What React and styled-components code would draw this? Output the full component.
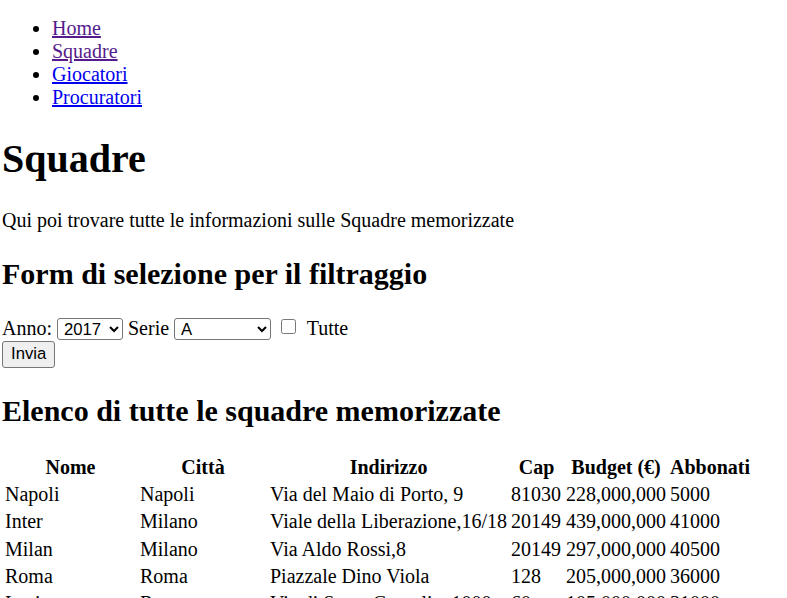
import styled, { createGlobalStyle } from 'styled-components'

const GlobalStyle = createGlobalStyle`
  body {
    margin: 0;
    background: #fff;
    color: #000;
    font-family: 'Liberation Serif', 'Times New Roman', serif;
    font-size: 20px;
  }
`

const Page = styled.div`
  padding: 0 2px;
`

const NavList = styled.ul`
  margin: 17px 0 16px;
  padding-left: 50px;
  list-style: disc;
`

const NavLink = styled.a`
  color: ${(p) => (p.$visited ? '#551a8b' : '#0000ee')};
  text-decoration: underline;
`

const Title = styled.h1`
  font-size: 40px;
  font-weight: bold;
  margin: 26px 0 26.8px;
`

const Intro = styled.p`
  margin: 20px 0;
`

const SectionTitle = styled.h2`
  font-size: 30px;
  font-weight: bold;
  margin: 24.9px 0;
`

const FilterForm = styled.form`
  margin: 0;
  line-height: 25px;
  padding-bottom: 1.5px;
`

const Select = styled.select`
  font-family: 'Liberation Sans', Arial, sans-serif;
  font-size: 16.7px;
  height: 22px;
  width: ${(p) => p.$w}px;
  padding: 0 0 0 2px;
  border: 1px solid #767676;
  border-radius: 3px;
  background: #fff;
  color: #000;
  vertical-align: 0;
`

const Checkbox = styled.input`
  width: 15px;
  height: 15px;
  margin: 0 6px 0 10px;
  vertical-align: 1px;
`

const SubmitButton = styled.button`
  font-family: 'Liberation Sans', Arial, sans-serif;
  font-size: 16.7px;
  height: 27px;
  padding: 0 8px;
  margin: 0;
  border: 1px solid #767676;
  border-radius: 3px;
  background: #efefef;
  color: #000;
  vertical-align: top;
`

const Table = styled.table`
  border-collapse: separate;
  border-spacing: 2px;
  font-size: 20px;
  line-height: 23.25px;
`

const HeadCell = styled.th`
  width: ${(p) => p.$w}px;
  padding: 1.5px 1px 0.5px;
  text-align: center;
  font-weight: bold;
`

const Cell = styled.td`
  padding: 1px;
  white-space: nowrap;
`

const links = [
  { label: 'Home', visited: true },
  { label: 'Squadre', visited: true },
  { label: 'Giocatori', visited: false },
  { label: 'Procuratori', visited: false },
]

const columns = [
  { label: 'Nome', w: 131 },
  { label: 'Città', w: 126 },
  { label: 'Indirizzo', w: 235 },
  { label: 'Cap', w: 51 },
  { label: 'Budget (€)', w: 99 },
  { label: 'Abbonati', w: 80 },
]

const teams = [
  ['Napoli', 'Napoli', 'Via del Maio di Porto, 9', '81030', '228,000,000', '5000'],
  ['Inter', 'Milano', 'Viale della Liberazione,16/18', '20149', '439,000,000', '41000'],
  ['Milan', 'Milano', 'Via Aldo Rossi,8', '20149', '297,000,000', '40500'],
  ['Roma', 'Roma', 'Piazzale Dino Viola', '128', '205,000,000', '36000'],
  ['Lazio', 'Roma', 'Via di Santa Cornelia, 1000', '60', '105,000,000', '31000'],
]

export default function App() {
  return (
    <Page>
      <GlobalStyle />
      <NavList>
        {links.map((l) => (
          <li key={l.label}>
            <NavLink href="#" $visited={l.visited}>
              {l.label}
            </NavLink>
          </li>
        ))}
      </NavList>

      <Title>Squadre</Title>
      <Intro>Qui poi trovare tutte le informazioni sulle Squadre memorizzate</Intro>

      <SectionTitle>Form di selezione per il filtraggio</SectionTitle>
      <FilterForm onSubmit={(e) => e.preventDefault()}>
        Anno:{' '}
        <Select $w={66} defaultValue="2017">
          <option>2017</option>
          <option>2018</option>
        </Select>{' '}
        Serie{' '}
        <Select $w={97} defaultValue="A">
          <option>A</option>
          <option>B</option>
        </Select>
        <Checkbox type="checkbox" /> Tutte
        <br />
        <SubmitButton type="submit">Invia</SubmitButton>
      </FilterForm>

      <SectionTitle>Elenco di tutte le squadre memorizzate</SectionTitle>
      <Table>
        <thead>
          <tr>
            {columns.map((c) => (
              <HeadCell key={c.label} $w={c.w}>
                {c.label}
              </HeadCell>
            ))}
          </tr>
        </thead>
        <tbody>
          {teams.map((row) => (
            <tr key={row[0]}>
              {row.map((v, i) => (
                <Cell key={i}>{v}</Cell>
              ))}
            </tr>
          ))}
        </tbody>
      </Table>
    </Page>
  )
}
